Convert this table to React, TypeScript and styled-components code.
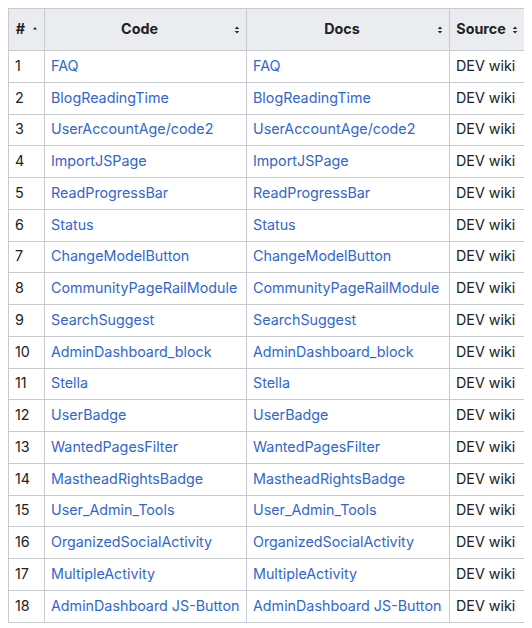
import React from "react";
import styled, { createGlobalStyle } from "styled-components";

const Global = createGlobalStyle`
  body {
    margin: 8px;
    background: #ffffff;
    font-family: Inter, "Noto Sans", sans-serif;
    font-size: 14px;
    color: #202122;
  }
`;

const Table = styled.table`
  border-collapse: collapse;
  table-layout: fixed;
  width: 516px;
  background: #ffffff;
  border: 1px solid #c8ccd1;
  font-family: Inter, "Noto Sans", sans-serif;
  font-size: 14.3px;
  color: #202122;
`;

const Th = styled.th<{ $w: number }>`
  width: ${(p) => p.$w}px;
  height: 42px;
  box-sizing: border-box;
  background: #eaecf0;
  border: 1px solid #c8ccd1;
  padding: 0 18px 2px 6px;
  font-weight: 700;
  text-align: center;
  position: relative;
`;

const SortIcon = styled.span`
  position: absolute;
  right: 6px;
  top: 50%;
  transform: translateY(-50%);
  display: flex;
  align-items: center;
`;

const Td = styled.td`
  height: 31.76px;
  box-sizing: border-box;
  border: 1px solid #c8ccd1;
  padding: 0 6px 2px 6px;
  white-space: nowrap;
  overflow: hidden;
`;

const Link = styled.a`
  color: #3366cc;
  text-decoration: none;
`;

const Both = () => (
  <svg width="6" height="10" viewBox="0 0 6 10">
    <path d="M3 1.5 L5.2 4 L0.8 4 Z" fill="#202122" />
    <path d="M3 8.5 L5.2 6 L0.8 6 Z" fill="#202122" />
  </svg>
);
const Up = () => (
  <svg width="6" height="10" viewBox="0 0 6 10">
    <path d="M3 2 L5 4.5 L1 4.5 Z" fill="#202122" />
  </svg>
);

const rows = [
  "FAQ",
  "BlogReadingTime",
  "UserAccountAge/code2",
  "ImportJSPage",
  "ReadProgressBar",
  "Status",
  "ChangeModelButton",
  "CommunityPageRailModule",
  "SearchSuggest",
  "AdminDashboard_block",
  "Stella",
  "UserBadge",
  "WantedPagesFilter",
  "MastheadRightsBadge",
  "User_Admin_Tools",
  "OrganizedSocialActivity",
  "MultipleActivity",
  "AdminDashboard JS-Button",
];

export default function App() {
  return (
    <>
      <Global />
      <Table>
        <thead>
          <tr>
            <Th $w={36}>
              #
              <SortIcon>
                <Up />
              </SortIcon>
            </Th>
            <Th $w={202}>
              Code
              <SortIcon>
                <Both />
              </SortIcon>
            </Th>
            <Th $w={203}>
              Docs
              <SortIcon>
                <Both />
              </SortIcon>
            </Th>
            <Th $w={75}>
              Source
              <SortIcon>
                <Both />
              </SortIcon>
            </Th>
          </tr>
        </thead>
        <tbody>
          {rows.map((r, i) => (
            <tr key={r}>
              <Td>{i + 1}</Td>
              <Td>
                <Link href="#">{r}</Link>
              </Td>
              <Td>
                <Link href="#">{r}</Link>
              </Td>
              <Td>DEV wiki</Td>
            </tr>
          ))}
        </tbody>
      </Table>
    </>
  );
}
